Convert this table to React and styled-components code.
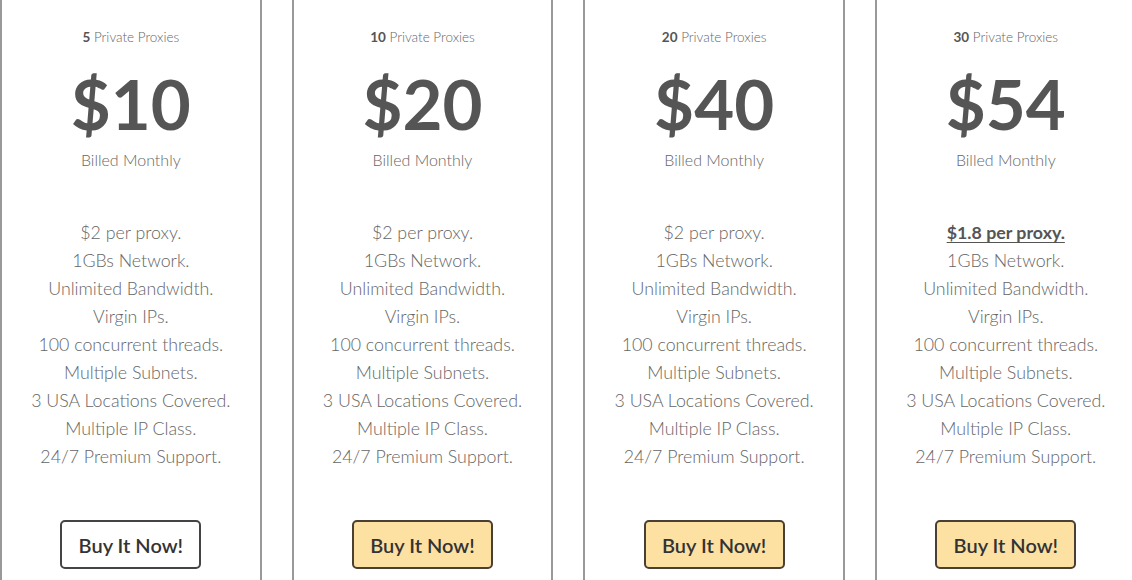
import React from "react";
import styled, { createGlobalStyle } from "styled-components";

const Global = createGlobalStyle`
  html, body { margin: 0; padding: 0; background: #fff; overflow: hidden; }
  body { font-family: Lato, "Open Sans", sans-serif; }
`;

const light = `"Lato Light", Lato, sans-serif`;

const Row = styled.div`
  display: grid;
  grid-template-columns: repeat(4, 261.67px);
  column-gap: 30px;
  width: 1132px;
  height: 580px;
  overflow: hidden;
`;

const Card = styled.div`
  box-sizing: border-box;
  height: 620px;
  border: 2px solid #999;
  border-top: none;
  display: flex;
  flex-direction: column;
  align-items: center;
  padding-top: 28px;
  text-align: center;
`;

const Title = styled.div`
  font-family: ${light};
  font-size: 13.5px;
  line-height: 18px;
  font-weight: 300;
  color: #666;
  b { font-family: Lato, sans-serif; font-weight: 700; color: #555; }
`;

const Price = styled.div`
  margin-top: 20.5px;
  font-size: 69px;
  line-height: 74px;
  font-weight: 700;
  color: #555;
`;

const Billed = styled.div`
  margin-top: 9.5px;
  font-family: ${light};
  font-size: 16px;
  line-height: 20px;
  font-weight: 300;
  color: #666;
`;

const Features = styled.ul`
  list-style: none;
  margin: 48px 0 0;
  padding: 0;
`;

const Feature = styled.li`
  font-family: ${(p) => (p.$strong ? "Lato, sans-serif" : light)};
  font-size: 17.8px;
  line-height: 28px;
  font-weight: ${(p) => (p.$strong ? 700 : 300)};
  color: ${(p) => (p.$strong ? "#555" : "#666")};
  text-decoration: ${(p) => (p.$strong ? "underline" : "none")};
  text-underline-offset: 3px;
  text-decoration-thickness: 1px;
`;

const Button = styled.button`
  margin-top: 50px;
  box-sizing: border-box;
  width: 141px;
  height: 49px;
  border: 2px solid ${(p) => (p.$plain ? "#444" : "#4a3f33")};
  border-radius: 5px;
  background: ${(p) => (p.$plain ? "#fff" : "#fde1a3")};
  font-family: Lato, sans-serif;
  font-size: 20px;
  font-weight: 600;
  color: #333;
  display: flex;
  align-items: center;
  justify-content: center;
  cursor: pointer;
  padding: 0;
`;

const plans = [
  { count: 5, price: 10, per: "$2 per proxy.", plain: true },
  { count: 10, price: 20, per: "$2 per proxy." },
  { count: 20, price: 40, per: "$2 per proxy." },
  { count: 30, price: 54, per: "$1.8 per proxy.", strong: true },
];

const features = [
  "1GBs Network.",
  "Unlimited Bandwidth.",
  "Virgin IPs.",
  "100 concurrent threads.",
  "Multiple Subnets.",
  "3 USA Locations Covered.",
  "Multiple IP Class.",
  "24/7 Premium Support.",
];

export default function App() {
  return (
    <>
      <Global />
      <Row>
        {plans.map((p) => (
          <Card key={p.count}>
            <Title>
              <b>{p.count}</b> Private Proxies
            </Title>
            <Price>${p.price}</Price>
            <Billed>Billed Monthly</Billed>
            <Features>
              <Feature $strong={p.strong}>{p.per}</Feature>
              {features.map((f) => (
                <Feature key={f}>{f}</Feature>
              ))}
            </Features>
            <Button $plain={p.plain}>Buy It Now!</Button>
          </Card>
        ))}
      </Row>
    </>
  );
}
